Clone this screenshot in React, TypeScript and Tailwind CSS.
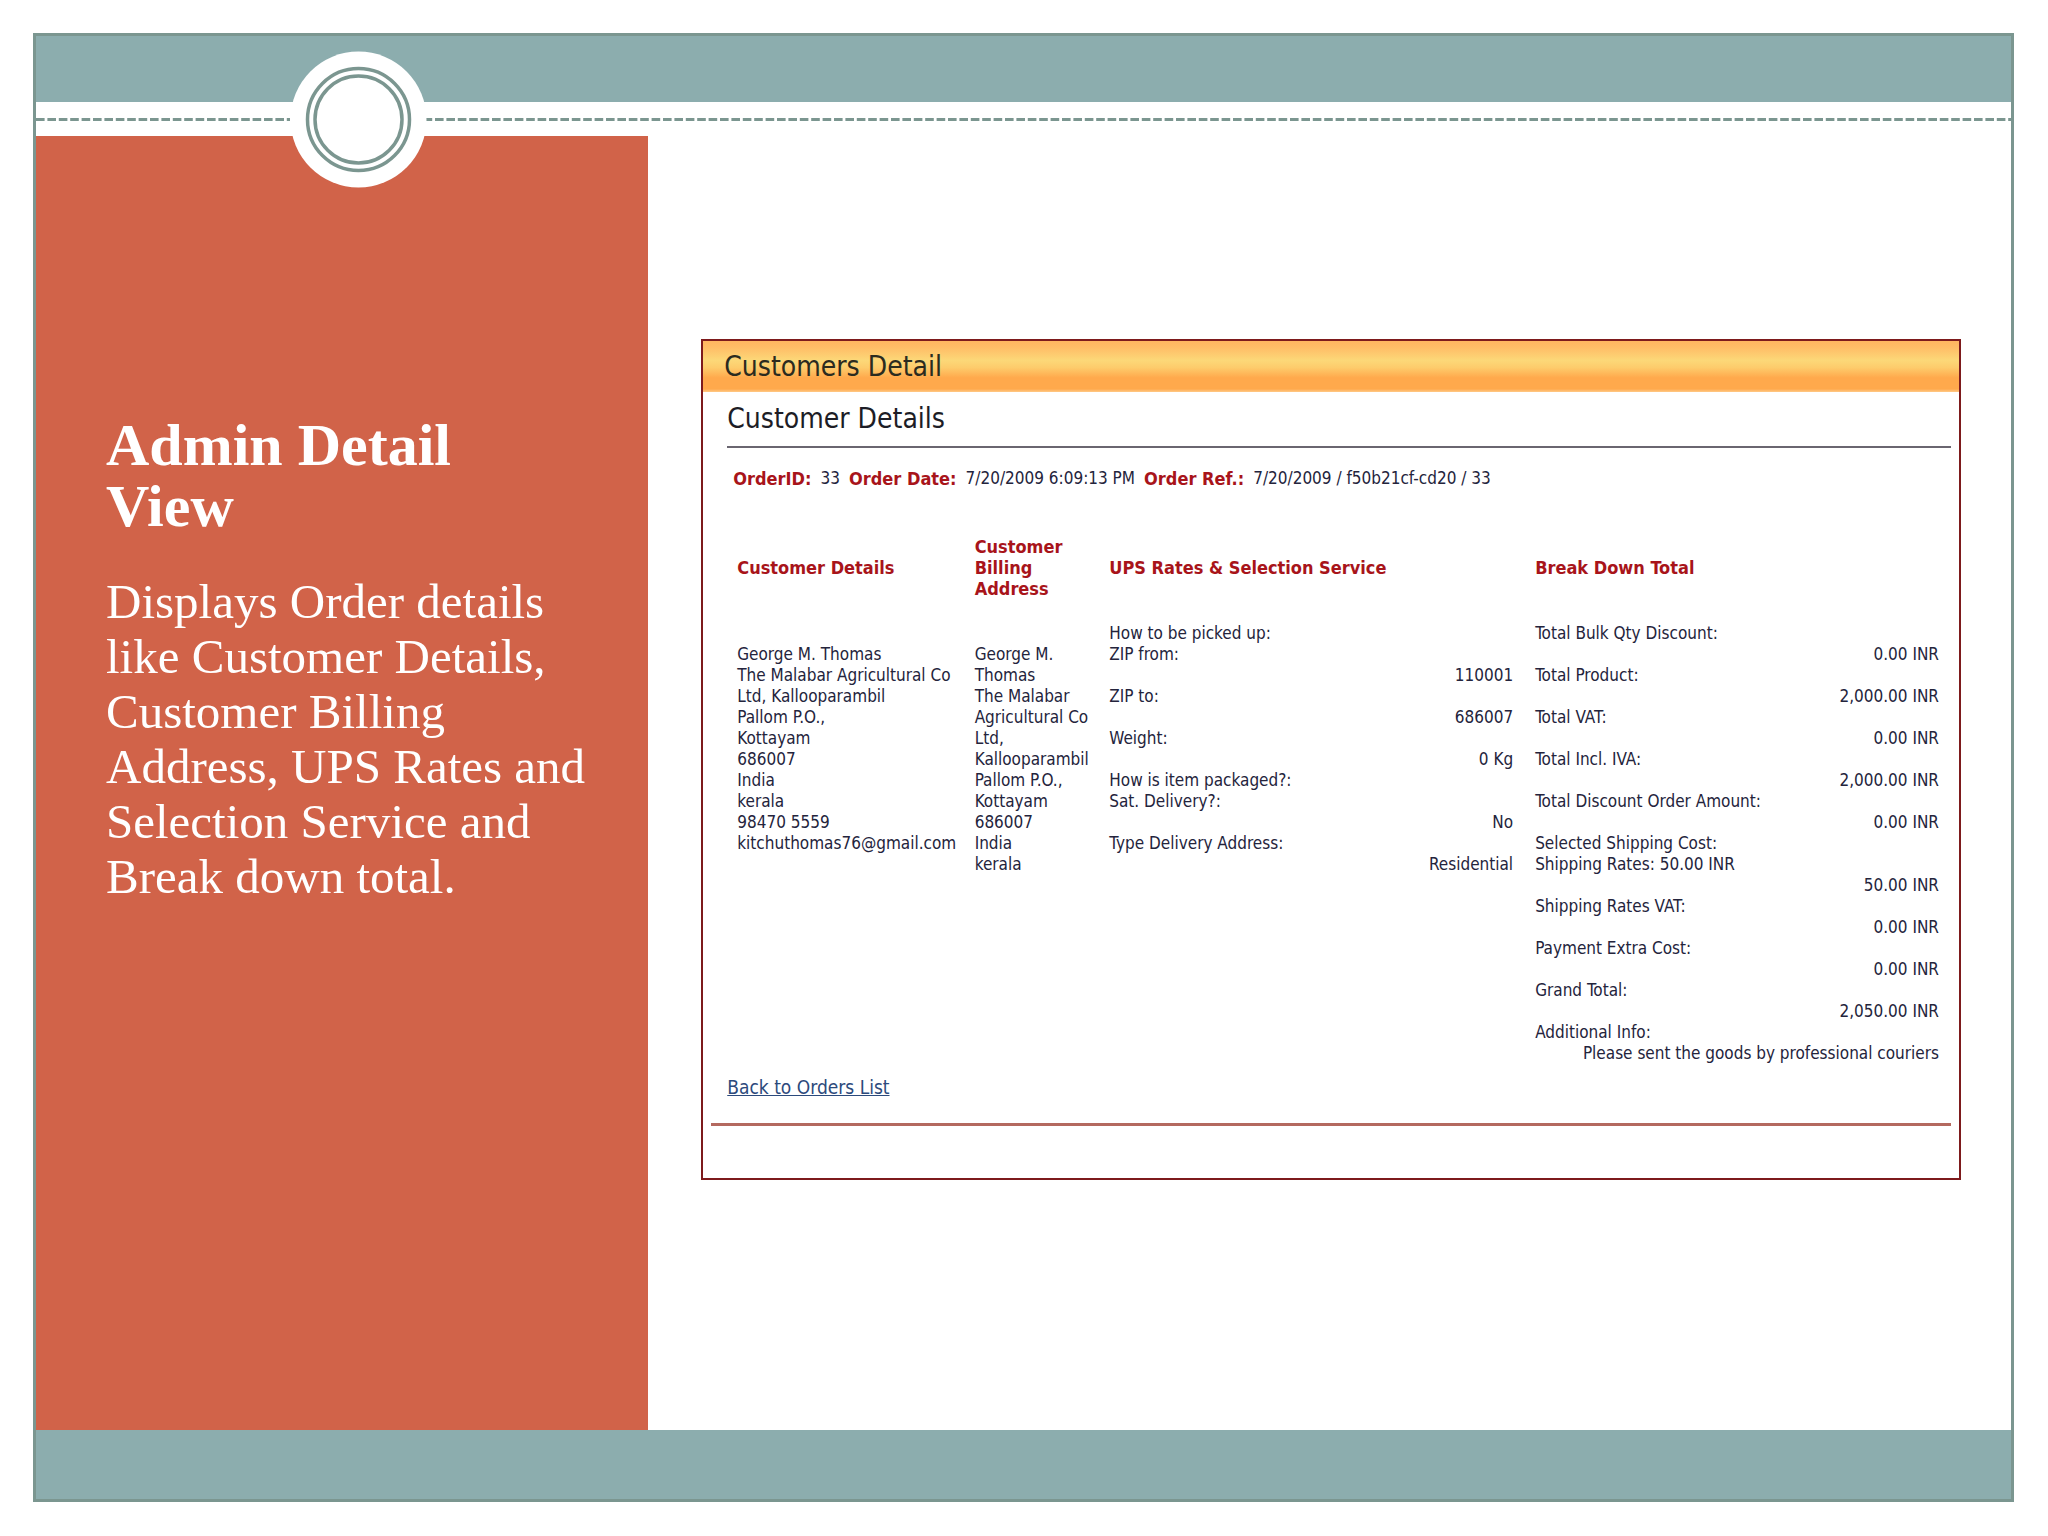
interface ILine {
    text: string
    right?: boolean
}

const customerLines: ILine[] = [
    { text: "" },
    { text: "George M. Thomas" },
    { text: "The Malabar Agricultural Co" },
    { text: "Ltd, Kallooparambil" },
    { text: "Pallom P.O.," },
    { text: "Kottayam" },
    { text: "686007" },
    { text: "India" },
    { text: "kerala" },
    { text: "98470 5559" },
    { text: "kitchuthomas76@gmail.com" },
]

const billingLines: ILine[] = [
    { text: "" },
    { text: "George M." },
    { text: "Thomas" },
    { text: "The Malabar" },
    { text: "Agricultural Co" },
    { text: "Ltd," },
    { text: "Kallooparambil" },
    { text: "Pallom P.O.," },
    { text: "Kottayam" },
    { text: "686007" },
    { text: "India" },
    { text: "kerala" },
]

const upsLines: ILine[] = [
    { text: "How to be picked up:" },
    { text: "ZIP from:" },
    { text: "110001", right: true },
    { text: "ZIP to:" },
    { text: "686007", right: true },
    { text: "Weight:" },
    { text: "0 Kg", right: true },
    { text: "How is item packaged?:" },
    { text: "Sat. Delivery?:" },
    { text: "No", right: true },
    { text: "Type Delivery Address:" },
    { text: "Residential", right: true },
]

const totalLines: ILine[] = [
    { text: "Total Bulk Qty Discount:" },
    { text: "0.00 INR", right: true },
    { text: "Total Product:" },
    { text: "2,000.00 INR", right: true },
    { text: "Total VAT:" },
    { text: "0.00 INR", right: true },
    { text: "Total Incl. IVA:" },
    { text: "2,000.00 INR", right: true },
    { text: "Total Discount Order Amount:" },
    { text: "0.00 INR", right: true },
    { text: "Selected Shipping Cost:" },
    { text: "Shipping Rates: 50.00 INR" },
    { text: "50.00 INR", right: true },
    { text: "Shipping Rates VAT:" },
    { text: "0.00 INR", right: true },
    { text: "Payment Extra Cost:" },
    { text: "0.00 INR", right: true },
    { text: "Grand Total:" },
    { text: "2,050.00 INR", right: true },
    { text: "Additional Info:" },
    { text: "Please sent the goods by professional couriers", right: true },
]

const LinesCell = ({ lines }: { lines: ILine[] }) => {
    return (
        <td className="pl-2.5 pr-3 align-top">
            {lines.map((line, index) => (
                <p key={index} className={line.right ? "h-[21px] whitespace-nowrap text-right" : "h-[21px] whitespace-nowrap"}>{line.text}</p>
            ))}
        </td>
    )
}

const Banner = () => {
    return (
        <header className="relative h-[100px]">
            <div className="h-[66px] bg-[#8cadae]"></div>
            <svg className="mt-4 block h-[3px] w-full" aria-hidden="true">
                <line x1="0" y1="1.5" x2="100%" y2="1.5" stroke="#7b9690" strokeWidth="3" strokeDasharray="8.6 2.8" />
            </svg>
            <svg className="absolute left-[251px] top-[12px] h-[142px] w-[142px]" viewBox="0 0 142 142" aria-hidden="true">
                <rect x="3" y="54" width="136" height="34" fill="#ffffff" />
                <circle cx="71.5" cy="71.5" r="68" fill="#ffffff" />
                <circle cx="71.5" cy="71.5" r="51" fill="none" stroke="#7b9690" strokeWidth="3.5" />
                <circle cx="71.5" cy="71.5" r="43.5" fill="none" stroke="#7b9690" strokeWidth="3.5" />
            </svg>
        </header>
    )
}

const CustomersCard = () => {
    return (
        <section className="border-2 border-[#7d1a1c] bg-white pb-[52px] font-['DejaVu_Sans_Condensed','DejaVu_Sans',sans-serif] text-[17px] leading-[21px] text-[#24243c]">
            <h2 className="h-[51px] bg-[linear-gradient(to_bottom,#ffb660_0%,#ffbc66_12%,#fcd878_38%,#fdcc6c_52%,#ffa94c_72%,#ffa94c_94%,#ffc987_100%)] pl-[21px] text-[28px] leading-[51px] text-[#2b2b1f]">Customers Detail</h2>
            <div className="pl-6 pr-2">
                <h3 className="h-[56px] border-b-2 border-[#6a6670] text-[28px] leading-[54px] text-[#1d1d26]">Customer Details</h3>
                <p className="mt-5 flex gap-[9px] pl-1.5 whitespace-nowrap">
                    <b className="text-[18px] leading-[21px] text-[#a8141a]">OrderID:</b>
                    <span>33</span>
                    <b className="text-[18px] leading-[21px] text-[#a8141a]">Order Date:</b>
                    <span>7/20/2009 6:09:13 PM</span>
                    <b className="text-[18px] leading-[21px] text-[#a8141a]">Order Ref.:</b>
                    <span>7/20/2009 / f50b21cf-cd20 / 33</span>
                </p>
                <table className="mt-[47px] w-full table-fixed text-left">
                    <thead>
                        <tr className="text-[18px] leading-[21px] text-[#a8141a]">
                            <th className="w-[19.4%] pb-6 pl-2.5">Customer Details</th>
                            <th className="w-[11%] pb-6 pl-2.5">Customer<br />Billing<br />Address</th>
                            <th className="w-[34.8%] pb-6 pl-2.5">UPS Rates &amp; Selection Service</th>
                            <th className="pb-6 pl-2.5">Break Down Total</th>
                        </tr>
                    </thead>
                    <tbody>
                        <tr>
                            <LinesCell lines={customerLines} />
                            <LinesCell lines={billingLines} />
                            <LinesCell lines={upsLines} />
                            <LinesCell lines={totalLines} />
                        </tr>
                    </tbody>
                </table>
                <a href="#orders" className="mt-[13px] inline-block text-[19px] leading-[21px] text-[#2c4a7c] underline">Back to Orders List</a>
            </div>
            <hr className="ml-2 mr-2 mt-6 border-t-3 border-[#b4695f]" />
        </section>
    )
}

const App = () => {
    return (
        <div className="flex min-h-screen bg-white p-[33px] pr-[34px] pb-[34px]">
            <div className="flex flex-1 flex-col border-3 border-[#7b9690]">
                <Banner />
                <main className="flex flex-1">
                    <aside className="w-[31%] bg-[#d16349] pl-[70px] pr-10 pt-[279px] font-['Liberation_Serif',serif] text-white">
                        <h1 className="text-[60px] font-bold leading-[61px]">Admin Detail<br />View</h1>
                        <p className="mt-[37px] whitespace-nowrap text-[49px] leading-[55px]">
                            Displays Order details<br />
                            like Customer Details,<br />
                            Customer Billing<br />
                            Address, UPS Rates and<br />
                            Selection Service and<br />
                            Break down total.
                        </p>
                    </aside>
                    <div className="flex-1 pl-[53px] pr-[50px] pt-[203px]">
                        <CustomersCard />
                    </div>
                </main>
                <footer className="h-[69px] bg-[#8cadae]"></footer>
            </div>
        </div>
    )
}

export default App
